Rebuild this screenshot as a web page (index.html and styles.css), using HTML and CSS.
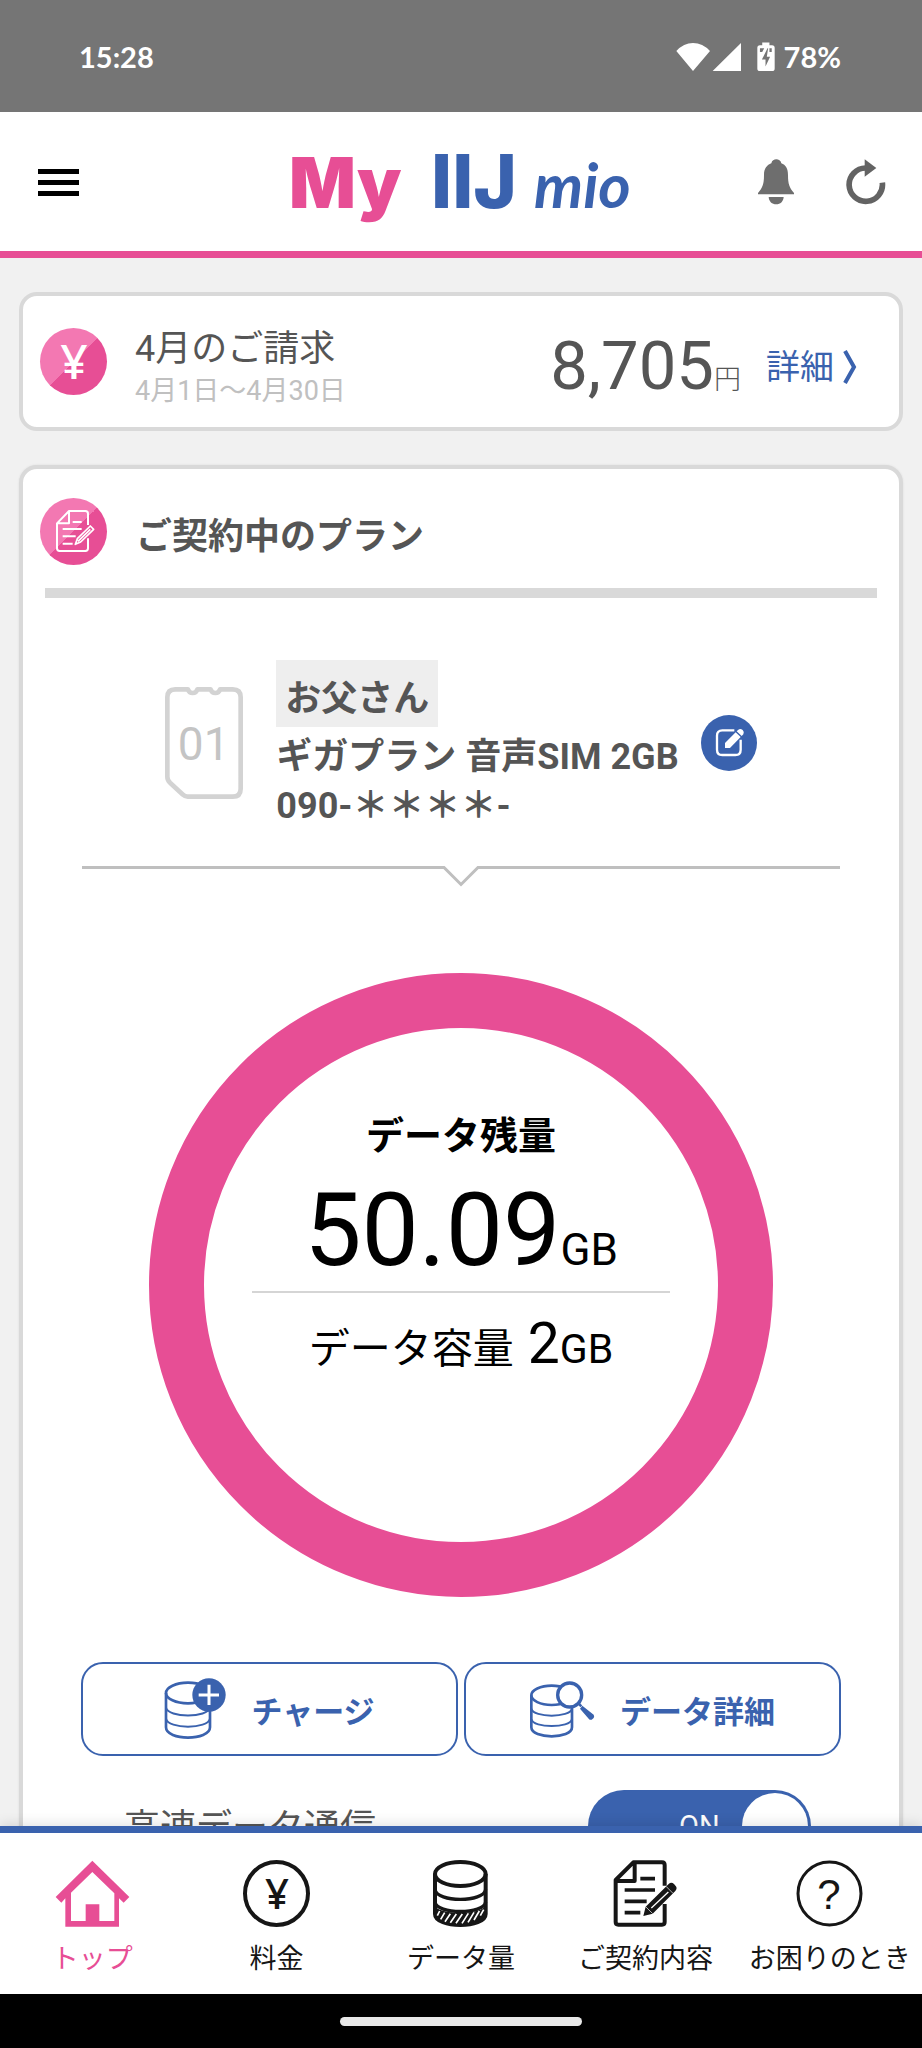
FILE: index.html
```html
<!DOCTYPE html>
<html lang="ja">
<head>
<meta charset="utf-8">
<meta name="viewport" content="width=device-width, initial-scale=1">
<title>My IIJmio</title>
<link rel="stylesheet" href="styles.css">
</head>
<body>
<div class="status-bar">
  <time class="status-time">15:28</time>
  <div class="status-icons">
    <svg width="66" height="30" viewBox="641 125 198 90" aria-hidden="true"><path fill="#fff" d="M642 152Q664 128 692 128Q721 128 743 152L692 212ZM751 212L836 128V212Z"/></svg>
    <svg class="battery" width="18" height="30" viewBox="882 125 55 90" aria-hidden="true"><path fill="#fff" d="M898 126h22v8h8q8 0 8 8v63q0 8-8 8h-37q-8 0-8-8v-63q0-8 8-8h7z"/><path fill="#757575" d="M891 143h13l-6 12h-7zM920 143h7v12h-7zM914 143L897 178H908V199L922 169H912L916 143z"/></svg>
    <span>78%</span>
  </div>
</div>

<header class="app-header">
  <button class="icon-button" type="button" aria-label="メニュー">
    <svg width="41" height="28" viewBox="0 0 41 28" aria-hidden="true"><path stroke="#000" stroke-width="5" d="M0 3.5H41M0 14.5H41M0 25.5H41"/></svg>
  </button>
  <h1 class="logo">
    <svg width="360" height="120" viewBox="0 0 360 120" role="img" aria-label="My IIJmio">
      <text class="logo-my" x="7" y="86">My</text>
      <text class="logo-iij" x="149" y="86">IIJ</text>
      <text class="logo-mio" x="252" y="86">mio</text>
    </svg>
  </h1>
  <div class="header-actions">
    <button class="icon-button" type="button" aria-label="お知らせ">
      <svg width="36" height="46" viewBox="891 477 108 138" aria-hidden="true"><path fill="#6e6e6e" d="M891 583V579C905 563 909 552 909 525C909 505 918 495 931 490C933 481 939 478 946 478C953 478 959 481 961 490C974 495 981 505 981 525C981 552 985 563 999 579V583ZM923 591H968C967 605 958 613 946 613C933 613 924 605 923 591Z"/></svg>
    </button>
    <button class="icon-button" type="button" aria-label="更新">
      <svg width="40" height="46" viewBox="1156 479 120 138" aria-hidden="true"><path fill="none" stroke="#636363" stroke-width="17" d="M1215 506A50 50 0 1 0 1265 550"/><path fill="#636363" d="M1212 480L1247 506L1212 532Z"/></svg>
    </button>
  </div>
</header>

<main class="content">
  <section class="card bill">
    <span class="badge" aria-hidden="true"><svg width="67" height="67" viewBox="0 0 67 67"><text class="badge-yen" x="34" y="51">¥</text></svg></span>
    <div class="bill-label">
      <h2 class="bill-title">4月のご請求</h2>
      <p class="bill-period">4月1日〜4月30日</p>
    </div>
    <p class="bill-amount">8,705<span class="bill-unit">円</span></p>
    <a class="bill-link" href="#">詳細<svg width="16" height="34" viewBox="0 0 16 34" aria-hidden="true"><path fill="none" stroke="#3a62ae" stroke-width="4" d="M3 1L12 17L3 33"/></svg></a>
  </section>

  <section class="card plan">
    <div class="plan-head">
      <span class="badge" aria-hidden="true"><svg width="67" height="67" viewBox="117 684 201 201"><g fill="none" stroke="#fff" stroke-width="6" stroke-linejoin="round"><path d="M261 765V731Q261 723 253 723H204L168 760V835Q168 843 176 843H253Q261 843 261 835V805M204 723V760H168"/><path d="M215 756H242M185 777H242M185 799H224M185 821H215"/><path stroke-width="5" d="M223 823L229 806L268 768L278 778L239 816ZM231 814L268 778"/></g></svg></span>
      <h2 class="plan-heading">ご契約中のプラン</h2>
    </div>
    <hr class="plan-rule">
    <div class="line-info">
      <svg class="line-icon" width="78" height="112" viewBox="318 198 234 336" aria-hidden="true"><path fill="none" stroke="#d3d3d3" stroke-width="14" stroke-linejoin="round" d="M325 229Q325 205 349 205H387Q390 216 401 216Q412 216 415 205H455Q458 216 469 216Q480 216 483 205H521Q545 205 545 229V503Q545 527 521 527H386Q378 527 372 521L333 485Q325 477 325 467Z"/><text class="sim-number" x="434" y="418">01</text></svg>
      <div class="line-details">
        <p class="line-name">お父さん</p>
        <p class="line-text">ギガプラン 音声SIM 2GB</p>
        <p class="line-text">090-＊＊＊＊-</p>
      </div>
      <button class="icon-button line-icon" type="button" aria-label="名前を編集">
        <svg width="56" height="56" viewBox="717 282 168 168" aria-hidden="true"><circle cx="801" cy="366" r="84" fill="#3a62ae"/><path fill="none" stroke="#fff" stroke-width="7" d="M817 328H781Q765 328 765 344V386Q765 402 781 402H820Q836 402 836 386V356"/><path fill="#fff" d="M789 381V366L821 334L836 348L804 381ZM824 331L829 326Q835 321 842 327Q848 333 844 340L839 345Z"/></svg>
      </button>
    </div>
    <div class="divider" aria-hidden="true">
      <span class="divider-line"></span>
      <svg width="38" height="22" viewBox="0 0 38 22"><path fill="none" stroke="#bfbfbf" stroke-width="3" d="M0 1.500H2L19 18.500L36 1.500H38"/></svg>
      <span class="divider-line"></span>
    </div>

    <div class="gauge">
      <h3 class="gauge-title">データ残量</h3>
      <p class="gauge-value">50.09<span class="gauge-unit">GB</span></p>
      <p class="gauge-total">データ容量 <span class="gauge-total-value">2</span>GB</p>
    </div>

    <div class="actions">
      <button class="action" type="button">
        <svg width="62" height="62" viewBox="314 142 186 186" aria-hidden="true"><g fill="none" stroke="#3a62ae" stroke-width="8"><ellipse cx="386" cy="187" rx="66" ry="31"/><path d="M320 187V290C320 331 452 331 452 290V187"/><path stroke-width="6" d="M320 231C326 262 446 262 452 231M320 264C326 296 446 296 452 264"/></g><circle cx="449" cy="193" r="50" fill="#3a62ae"/><path stroke="#fff" stroke-width="9" d="M418 193H479M449 162V223"/></svg>
        チャージ
      </button>
      <button class="action" type="button">
        <svg width="65" height="62" viewBox="243 142 195 186" aria-hidden="true"><g fill="none" stroke="#3a62ae" stroke-width="8"><ellipse cx="308" cy="194" rx="61" ry="29"/><path d="M247 194V290C247 326 369 326 369 290V194"/><path stroke-width="6" d="M247 234C253 262 363 262 369 234M247 266C253 293 363 293 369 266"/><circle cx="362" cy="193" r="36" stroke-width="10" fill="#fff"/><path d="M389 219L397 227"/></g><path fill="#3a62ae" d="M400 225L434 252Q437 257 434 262L428 267Q423 269 419 264L393 234Z"/></svg>
        データ詳細
      </button>
    </div>

    <div class="speed">
      <label class="speed-label" for="speed-switch">高速データ通信</label>
      <span class="switch">
        <input id="speed-switch" class="switch-input" type="checkbox" role="switch" checked>
        <span class="switch-text" aria-hidden="true">ON</span>
      </span>
    </div>
  </section>
</main>

<nav class="tabs">
  <a class="tab tab-active" href="#" aria-current="page">
    <svg width="75" height="67" viewBox="164 150 225 201" aria-hidden="true"><path fill="#e74e95" fill-rule="evenodd" d="M276 152L387 261L370 278L356 265V350H195V265L183 278L166 261ZM276 186L212 248V333H256V283H297V333H342V250Z"/></svg>
    トップ
  </a>
  <a class="tab" href="#">
    <svg width="67" height="67" viewBox="0 0 67 67" aria-hidden="true"><circle cx="33.500" cy="33.500" r="31.500" fill="none" stroke="#161616" stroke-width="4"/><text class="tab-yen" x="34" y="49">¥</text></svg>
    料金
  </a>
  <a class="tab" href="#">
    <svg width="57" height="67" viewBox="1300 150 171 201" aria-hidden="true"><path fill="#161616" d="M1308 284C1312 316 1456 316 1461 284V312C1461 356 1308 356 1308 312Z"/><g fill="none" stroke="#161616" stroke-width="12"><ellipse cx="1385" cy="192" rx="76" ry="36"/><path d="M1309 192V312C1309 356 1461 356 1461 312V192"/><path stroke-width="10" d="M1309 238C1314 278 1456 278 1461 238M1309 276C1314 314 1456 314 1461 276"/></g><path stroke="#fff" stroke-width="5" d="M1323 303L1316 317M1338 308L1326 328M1355 311L1339 335M1373 312L1355 338M1391 312L1372 340M1409 310L1390 340M1426 307L1408 337M1442 303L1426 330M1455 299L1445 317"/></svg>
    データ量
  </a>
  <a class="tab" href="#">
    <svg width="64" height="67" viewBox="458 150 192 201" aria-hidden="true"><g fill="none" stroke="#161616" stroke-width="12" stroke-linejoin="round"><path d="M613 227V165Q613 157 605 157H519L466 210V336Q466 344 474 344H605Q613 344 613 336V282M523 157V213H466"/><path stroke-width="11" d="M540 206H584M493 240H584M493 274H559M493 308H540"/></g><path fill="#161616" d="M549 318L556 290L625 222Q633 214 641 222L646 228Q652 235 645 243L577 311Z"/><path stroke="#fff" stroke-width="4" d="M573 294L624 246"/><path stroke="#fff" stroke-width="2" d="M556 290L577 311M617 229L638 250"/></svg>
    ご契約内容
  </a>
  <a class="tab" href="#">
    <svg width="67" height="67" viewBox="0 0 67 67" aria-hidden="true"><circle cx="33.500" cy="33.500" r="31.500" fill="none" stroke="#161616" stroke-width="3"/><text class="tab-question" x="33" y="49">?</text></svg>
    お困りのとき
  </a>
</nav>
<div class="gesture-bar"><span class="gesture-handle"></span></div>
</body>
</html>
```
FILE: styles.css
```css
* {
  box-sizing: border-box;
}

body {
  margin: 0;
  height: 100vh;
  display: flex;
  flex-direction: column;
  background: #f1f1f1;
  color: #555;
  font-family: Roboto, "Noto Sans CJK JP", sans-serif;
}

h1, h2, h3, p {
  margin: 0;
  font-weight: 400;
}

svg {
  display: block;
  flex: none;
}

button {
  font-family: inherit;
  cursor: pointer;
}

a {
  text-decoration: none;
}

.icon-button {
  padding: 0;
  border: 0;
  background: none;
}

/* Status bar */
.status-bar {
  flex: none;
  height: 112px;
  padding: 2px 81px 0 79px;
  display: flex;
  align-items: center;
  justify-content: space-between;
  background: #757575;
  color: #fff;
  font: 700 29px/36px Lato, sans-serif;
}

.status-icons {
  display: flex;
  align-items: center;
}

.battery {
  margin: 0 9px 0 15px;
}

/* Header */
.app-header {
  flex: none;
  height: 146px;
  padding: 0 36px 0 38px;
  display: grid;
  grid-template-columns: 1fr auto 1fr;
  align-items: center;
  background: #fff;
  border-bottom: 7px solid #e74e95;
}

.logo-my {
  fill: #e74e95;
  font: 900 70px Inter, sans-serif;
}

.logo-iij {
  fill: #3a62ae;
  font: 800 74px Inter, sans-serif;
}

.logo-mio {
  fill: #3a62ae;
  font: italic 700 62px Lato, sans-serif;
}

.header-actions {
  display: flex;
  justify-content: flex-end;
  gap: 52px;
}

/* Content */
.content {
  flex: 1;
  min-height: 0;
  padding: 34px 19px 0;
  overflow: auto;
  scrollbar-width: none;
}

.card {
  margin-bottom: 34px;
  background: #fff;
  border: 4px solid #d9d9d9;
  border-radius: 18px;
}

.badge {
  flex: none;
  border-radius: 50%;
  background: linear-gradient(135deg, #f378b2 50%, #e74e95 50%);
}

.badge-yen {
  fill: #fff;
  font: 500 48px "Noto Sans", sans-serif;
  text-anchor: middle;
}

/* Billing */
.bill {
  padding: 32px 41px 15px 17px;
  display: flex;
  align-items: flex-start;
}

.bill-label {
  flex: 1;
  padding-left: 28px;
  line-height: 42px;
}

.bill-title {
  font-size: 36px;
}

.bill-period {
  color: #c0c0c0;
  font-size: 27px;
}

.bill-amount {
  font-size: 67px;
  line-height: 76px;
}

.bill-unit {
  font-size: 27px;
  font-weight: 300;
  line-height: 27px;
}

.bill-link {
  margin-left: 25px;
  display: flex;
  align-items: center;
  gap: 8px;
  color: #3a62ae;
  font-size: 34px;
  line-height: 78px;
}

/* Plan */
.plan {
  padding: 29px 0 60px;
  box-shadow: 0 0 2px #d9d9d9;
}

.plan-head {
  padding: 0 17px;
  display: flex;
  align-items: flex-start;
  gap: 29px;
}

.plan-heading {
  font-size: 36px;
  font-weight: 700;
  line-height: 79px;
}

.plan-rule {
  height: 10px;
  margin: 11px 22px 62px;
  border: 0;
  background: #d9d9d9;
}

.line-info {
  display: flex;
  align-items: center;
  justify-content: center;
  font-size: 36px;
}

.line-icon {
  margin-bottom: 6px;
}

.sim-number {
  fill: #c4c4c4;
  font: 400 138px Roboto, sans-serif;
  text-anchor: middle;
}

.line-details {
  margin: 0 22px 0 33px;
}

.line-name {
  width: fit-content;
  margin-bottom: 6px;
  padding: 12px 9px 0;
  background: #eee;
  font-weight: 700;
  line-height: 55px;
}

.line-text {
  font-weight: 700;
  line-height: 49px;
}

.divider {
  margin: 35px 59px 0;
  display: flex;
}

.divider-line {
  flex: 1;
  height: 3px;
  background: #bfbfbf;
}

/* Data gauge */
.gauge {
  width: 624px;
  max-width: 100%;
  aspect-ratio: 1;
  margin: 85px auto 65px;
  padding: 83px 48px 0;
  border: 55px solid #e74e95;
  border-radius: 50%;
  color: #000;
  text-align: center;
}

.gauge-title {
  font-size: 38px;
  font-weight: 700;
  line-height: 50px;
}

.gauge-value {
  padding: 14px 0 6px;
  border-bottom: 2px solid #d5d5d5;
  font-size: 102px;
  line-height: 110px;
}

.gauge-unit {
  font-size: 44px;
  line-height: 44px;
}

.gauge-total {
  padding-top: 21px;
  font-size: 41px;
  line-height: 60px;
}

.gauge-total-value {
  margin-left: 4px;
  font-size: 57px;
}

/* Actions */
.actions {
  margin: 0 58px 32px;
  display: grid;
  grid-template-columns: 1fr 1fr;
  gap: 6px;
}

.action {
  height: 94px;
  padding: 0;
  display: flex;
  align-items: center;
  justify-content: center;
  gap: 25px;
  background: #fff;
  border: 2px solid #3a62ae;
  border-radius: 22px;
  color: #3a62ae;
  font-size: 31px;
  font-weight: 700;
}

.speed {
  margin: 0 88px 0 101px;
  display: flex;
  justify-content: space-between;
  align-items: center;
}

.speed-label {
  padding-top: 4px;
  font-size: 36px;
  line-height: 72px;
}

.switch {
  width: 223px;
  height: 72px;
  display: grid;
  align-items: center;
}

.switch-input,
.switch-text {
  grid-area: 1 / 1;
}

.switch-input {
  appearance: none;
  width: 100%;
  height: 100%;
  margin: 0;
  padding: 3px;
  display: flex;
  background: #9a9a9a;
  border-radius: 36px;
}

.switch-input::before {
  content: "";
  width: 66px;
  height: 66px;
  border-radius: 50%;
  background: #fff;
}

.switch-input:checked {
  justify-content: flex-end;
  background: #3a62ae;
}

.switch-text {
  padding-left: 91px;
  color: #fff;
  font-size: 29px;
  pointer-events: none;
}

/* Bottom tabs */
.tabs {
  flex: none;
  height: 168px;
  padding-top: 27px;
  display: grid;
  grid-template-columns: repeat(5, 1fr);
  background: #fff;
  border-top: 7px solid #3a62ae;
  box-shadow: 0 -2px 12px rgba(0, 0, 0, 0.12);
}

.tab {
  display: flex;
  flex-direction: column;
  align-items: center;
  gap: 12px;
  color: #161616;
  font-size: 27px;
  line-height: 40px;
  white-space: nowrap;
}

.tab-active {
  color: #e74e95;
}

.tab-yen,
.tab-question {
  fill: #161616;
  font: 500 42px "Noto Sans", sans-serif;
  text-anchor: middle;
}

.tab-question {
  font: 400 42px "Liberation Sans", sans-serif;
}

.gesture-bar {
  flex: none;
  height: 54px;
  display: grid;
  place-items: center;
  background: #000;
}

.gesture-handle {
  width: 242px;
  height: 9px;
  border-radius: 5px;
  background: #e8e8e8;
}
```
